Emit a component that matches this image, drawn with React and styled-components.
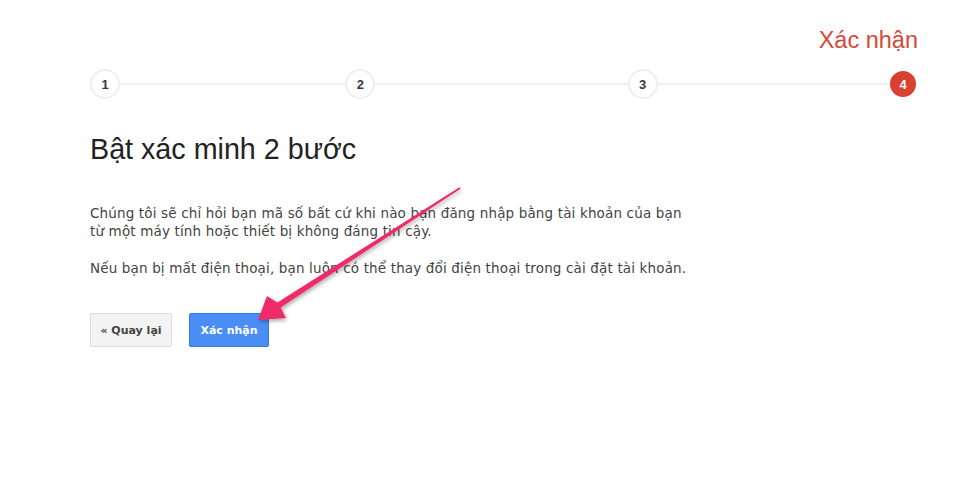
import React from "react";
import styled, { createGlobalStyle } from "styled-components";

const GlobalStyle = createGlobalStyle`
  html, body {
    margin: 0;
    padding: 0;
    background: #ffffff;
  }
  body {
    font-family: "Liberation Sans", Arial, sans-serif;
  }
`;

const Page = styled.div`
  position: relative;
  width: 960px;
  height: 481px;
  box-sizing: border-box;
  padding: 26px 42px 0 90px;
  overflow: hidden;
  background: #ffffff;
`;

const StepTitle = styled.div`
  text-align: right;
  font-size: 23.5px;
  line-height: 28px;
  color: #d9473a;
`;

const Steps = styled.div`
  display: flex;
  align-items: center;
  margin-top: 15px;
`;

const Circle = styled.div`
  flex: none;
  width: 30px;
  height: 30px;
  box-sizing: border-box;
  border-radius: 50%;
  border: 2px solid ${(p) => (p.$active ? "#ffffff" : "#efefef")};
  background: ${(p) => (p.$active ? "#d9402f" : "#ffffff")};
  color: ${(p) => (p.$active ? "#ffffff" : "#3a3a3a")};
  display: flex;
  align-items: center;
  justify-content: center;
  font-size: 13px;
  font-weight: bold;
`;

const Line = styled.div`
  flex: ${(p) => p.$grow};
  height: 2px;
  background: #efefef;
`;

const Heading = styled.h1`
  margin: 34px 0 0 0;
  font-size: 28.7px;
  line-height: 32px;
  font-weight: normal;
  color: #222222;
`;

const Text = styled.p`
  margin: ${(p) => (p.$first ? "39px" : "19px")} 0 0 0;
  font-family: "DejaVu Sans", Verdana, sans-serif;
  font-size: 13.5px;
  letter-spacing: 0.15px;
  line-height: 18px;
  color: #444444;
  max-width: 640px;
`;

const Actions = styled.div`
  display: flex;
  gap: 17px;
  margin-top: 36px;
`;

const Button = styled.button`
  height: 34px;
  padding: 0 ${(p) => (p.$primary ? "10px" : "6px")};
  min-width: ${(p) => (p.$primary ? "80px" : "82px")};
  border-radius: 2px;
  border: 1px solid ${(p) => (p.$primary ? "#3079ed" : "#dcdcdc")};
  background: ${(p) => (p.$primary ? "#4a8ef5" : "#f3f3f3")};
  color: ${(p) => (p.$primary ? "#ffffff" : "#444444")};
  font-family: "DejaVu Sans", Verdana, sans-serif;
  font-size: 11px;
  font-weight: bold;
  cursor: pointer;
`;

const ArrowLayer = styled.svg`
  position: absolute;
  left: 0;
  top: 0;
  width: 960px;
  height: 481px;
  pointer-events: none;
`;

export default function App() {
  return (
    <>
      <GlobalStyle />
      <Page>
        <StepTitle>Xác nhận</StepTitle>
        <Steps>
          <Circle>1</Circle>
          <Line $grow={225} />
          <Circle>2</Circle>
          <Line $grow={252} />
          <Circle>3</Circle>
          <Line $grow={230} />
          <Circle $active>4</Circle>
        </Steps>
        <Heading>Bật xác minh 2 bước</Heading>
        <Text $first>
          Chúng tôi sẽ chỉ hỏi bạn mã số bất cứ khi nào bạn đăng nhập bằng tài khoản của bạn
          <br />
          từ một máy tính hoặc thiết bị không đáng tin cậy.
        </Text>
        <Text>
          Nếu bạn bị mất điện thoại, bạn luôn có thể thay đổi điện thoại trong cài đặt tài khoản.
        </Text>
        <Actions>
          <Button>« Quay lại</Button>
          <Button $primary>Xác nhận</Button>
        </Actions>
        <ArrowLayer viewBox="0 0 960 481">
          <defs>
            <filter id="shadow" x="-20%" y="-20%" width="140%" height="140%">
              <feDropShadow dx="1" dy="2" stdDeviation="2" floodColor="#000" floodOpacity="0.35" />
            </filter>
          </defs>
          <polygon
            points="258,320 267,296 277.4,302.5 459.5,187.2 460.5,188.8 280.6,307.5 286,318"
            fill="#ee2b68"
            filter="url(#shadow)"
          />
        </ArrowLayer>
      </Page>
    </>
  );
}
